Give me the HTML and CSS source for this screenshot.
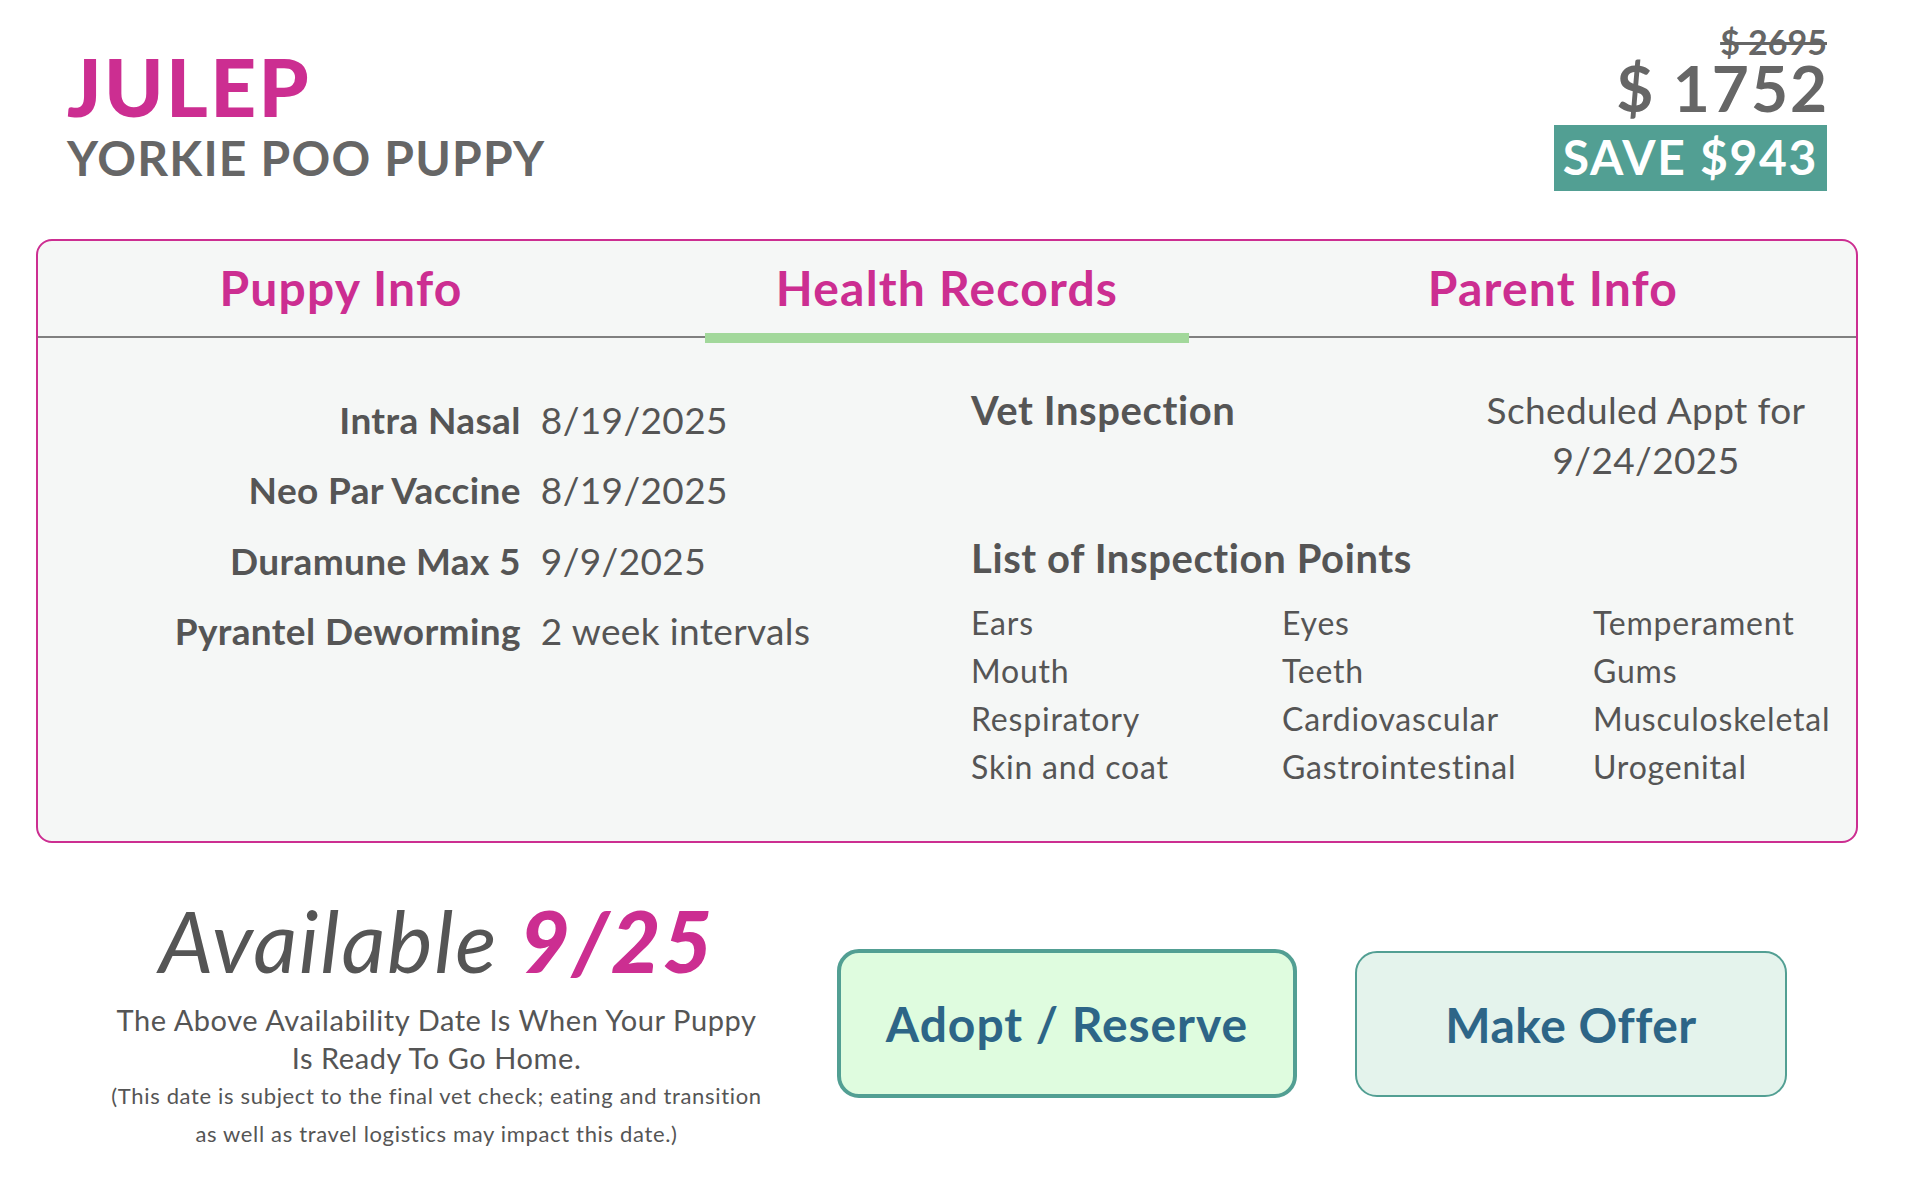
FILE: index.html
```html
<!DOCTYPE html>
<html lang="en">
<head>
<meta charset="utf-8">
<title>Julep - Yorkie Poo Puppy</title>
<link rel="stylesheet" href="styles.css">
</head>
<body>
<header class="top">
  <div class="ident">
    <h1 class="name">JULEP</h1>
    <h2 class="breed">YORKIE POO PUPPY</h2>
  </div>
  <div class="price">
    <div class="old">$ 2695</div>
    <div class="now">$ 1752</div>
    <div class="save">SAVE $943</div>
  </div>
</header>

<section class="card">
  <nav class="tabs">
    <div class="tab">Puppy Info</div>
    <div class="tab active">Health Records</div>
    <div class="tab">Parent Info</div>
  </nav>
  <div class="panel">
    <div class="vaccines">
      <div class="vlabel">Intra Nasal</div><div class="vval">8/19/2025</div>
      <div class="vlabel">Neo Par Vaccine</div><div class="vval">8/19/2025</div>
      <div class="vlabel">Duramune Max 5</div><div class="vval">9/9/2025</div>
      <div class="vlabel">Pyrantel Deworming</div><div class="vval">2 week intervals</div>
    </div>
    <div class="vet">
      <div class="vet-row">
        <h3 class="vet-title">Vet Inspection</h3>
        <div class="appt">Scheduled Appt for<br>9/24/2025</div>
      </div>
      <h3 class="list-title">List of Inspection Points</h3>
      <ul class="points">
        <li>Ears</li><li>Eyes</li><li>Temperament</li>
        <li>Mouth</li><li>Teeth</li><li>Gums</li>
        <li>Respiratory</li><li>Cardiovascular</li><li>Musculoskeletal</li>
        <li>Skin and coat</li><li>Gastrointestinal</li><li>Urogenital</li>
      </ul>
    </div>
  </div>
</section>

<section class="bottom">
  <div class="avail">
    <div class="avail-title">Available <span class="date">9/25</span></div>
    <p class="avail-note">The Above Availability Date Is When Your Puppy<br>Is Ready To Go Home.</p>
    <p class="avail-small">(This date is subject to the final vet check; eating and transition<br>as well as travel logistics may impact this date.)</p>
  </div>
  <button class="btn adopt">Adopt / Reserve</button>
  <button class="btn offer">Make Offer</button>
</section>
</body>
</html>
```

FILE: styles.css
```css
* { box-sizing: border-box; }
html, body { margin: 0; padding: 0; background: #ffffff; }
body {
  font-family: Lato, "Open Sans", "Noto Sans", sans-serif;
  color: #555555;
}

/* ---------- header ---------- */
.top {
  display: flex;
  justify-content: space-between;
  align-items: flex-start;
  padding: 26px 82px 0 67px;
}
.ident { padding-top: 20px; }
.name {
  margin: 0;
  font-size: 80px;
  line-height: 80px;
  font-weight: 900;
  color: #cc2e91;
  letter-spacing: 0.03em;
}
.breed {
  margin: 8px 0 0;
  font-size: 48px;
  line-height: 48px;
  font-weight: 700;
  color: #666666;
  letter-spacing: 0.025em;
}
.price {
  display: flex;
  flex-direction: column;
  align-items: flex-end;
}
.old {
  font-size: 34px;
  line-height: 32px;
  font-weight: 700;
  color: #666666;
  text-decoration: line-through;
  text-decoration-thickness: 3px;
}
.now {
  margin-top: 2px;
  font-size: 64px;
  line-height: 56px;
  font-weight: 700;
  color: #666666;
  letter-spacing: 0.03em;
  margin-right: -2px;
}
.save {
  margin-top: 9px;
  background: #529f93;
  color: #ffffff;
  font-size: 48px;
  line-height: 56px;
  font-weight: 700;
  letter-spacing: 0.035em;
  padding: 4px 9px 6px 9px;
}

/* ---------- card ---------- */
.card {
  margin: 48px 51px 0 36px;
  border: 2px solid #cc2e91;
  border-radius: 16px;
  background: #f5f7f6;
}
.tabs {
  display: grid;
  grid-template-columns: 1fr 1fr 1fr;
  border-bottom: 2px solid #808080;
}
.tab {
  position: relative;
  height: 95px;
  padding-top: 23px;
  text-align: center;
  font-size: 48px;
  line-height: 48px;
  font-weight: 700;
  color: #cc2e91;
  letter-spacing: 0.025em;
}
.tab.active::after {
  content: "";
  position: absolute;
  left: 10%;
  right: 10%;
  bottom: -7px;
  height: 10px;
  background: #a2d89b;
}
.panel {
  display: grid;
  grid-template-columns: 1fr 1fr;
  padding: 47px 0 50px;
}
.vaccines {
  display: grid;
  grid-template-columns: auto auto;
  column-gap: 20px;
  justify-content: center;
  align-content: start;
  font-size: 37px;
  line-height: 70.3px;
  letter-spacing: 0.01em;
  color: #555555;
}
.vlabel { text-align: right; font-weight: 700; }
.vval { font-weight: 400; }

.vet { padding-left: 24px; }
.vet-row {
  display: grid;
  grid-template-columns: 1fr 420px;
  height: 100px;
}
.vet-title, .list-title {
  margin: 0;
  font-size: 40px;
  line-height: 50px;
  font-weight: 700;
  letter-spacing: 0.015em;
  color: #555555;
}
.appt {
  text-align: center;
  font-size: 37px;
  line-height: 50px;
  letter-spacing: 0.01em;
  color: #555555;
}
.list-title { margin-top: 48px; }
.points {
  list-style: none;
  margin: 16px 0 0;
  padding: 0;
  display: grid;
  grid-template-columns: 311px 311px auto;
  font-size: 32px;
  line-height: 48px;
  letter-spacing: 0.025em;
  color: #555555;
}

/* ---------- bottom ---------- */
.bottom {
  display: flex;
  align-items: flex-start;
  margin-top: 52px;
  padding-left: 36px;
}
.avail {
  width: 801px;
  text-align: center;
  color: #555555;
}
.avail-title {
  font-size: 86px;
  line-height: 90px;
  font-style: italic;
  font-weight: 400;
  letter-spacing: 0.02em;
  color: #555555;
}
.avail-title .date {
  font-weight: 900;
  color: #cc2e91;
}
.avail-note {
  margin: 16px 0 0;
  font-size: 29px;
  line-height: 38px;
  letter-spacing: 0.02em;
}
.avail-small {
  margin: 0;
  font-size: 22px;
  line-height: 38px;
  letter-spacing: 0.03em;
}
.btn {
  font-family: Lato, "Open Sans", "Noto Sans", sans-serif;
  font-size: 48px;
  font-weight: 700;
  color: #2d6587;
  border-style: solid;
  border-color: #529f93;
  border-radius: 22px;
  display: flex;
  align-items: center;
  justify-content: center;
  padding: 0;
  letter-spacing: 0.02em;
}
.adopt {
  width: 460px;
  height: 149px;
  margin-top: 54px;
  border-width: 4px;
  background: #dffcdf;
}
.offer {
  width: 432px;
  height: 146px;
  margin-top: 56px;
  margin-left: 58px;
  border-width: 2px;
  background: #e4f3ec;
  letter-spacing: 0.01em;
}
```
